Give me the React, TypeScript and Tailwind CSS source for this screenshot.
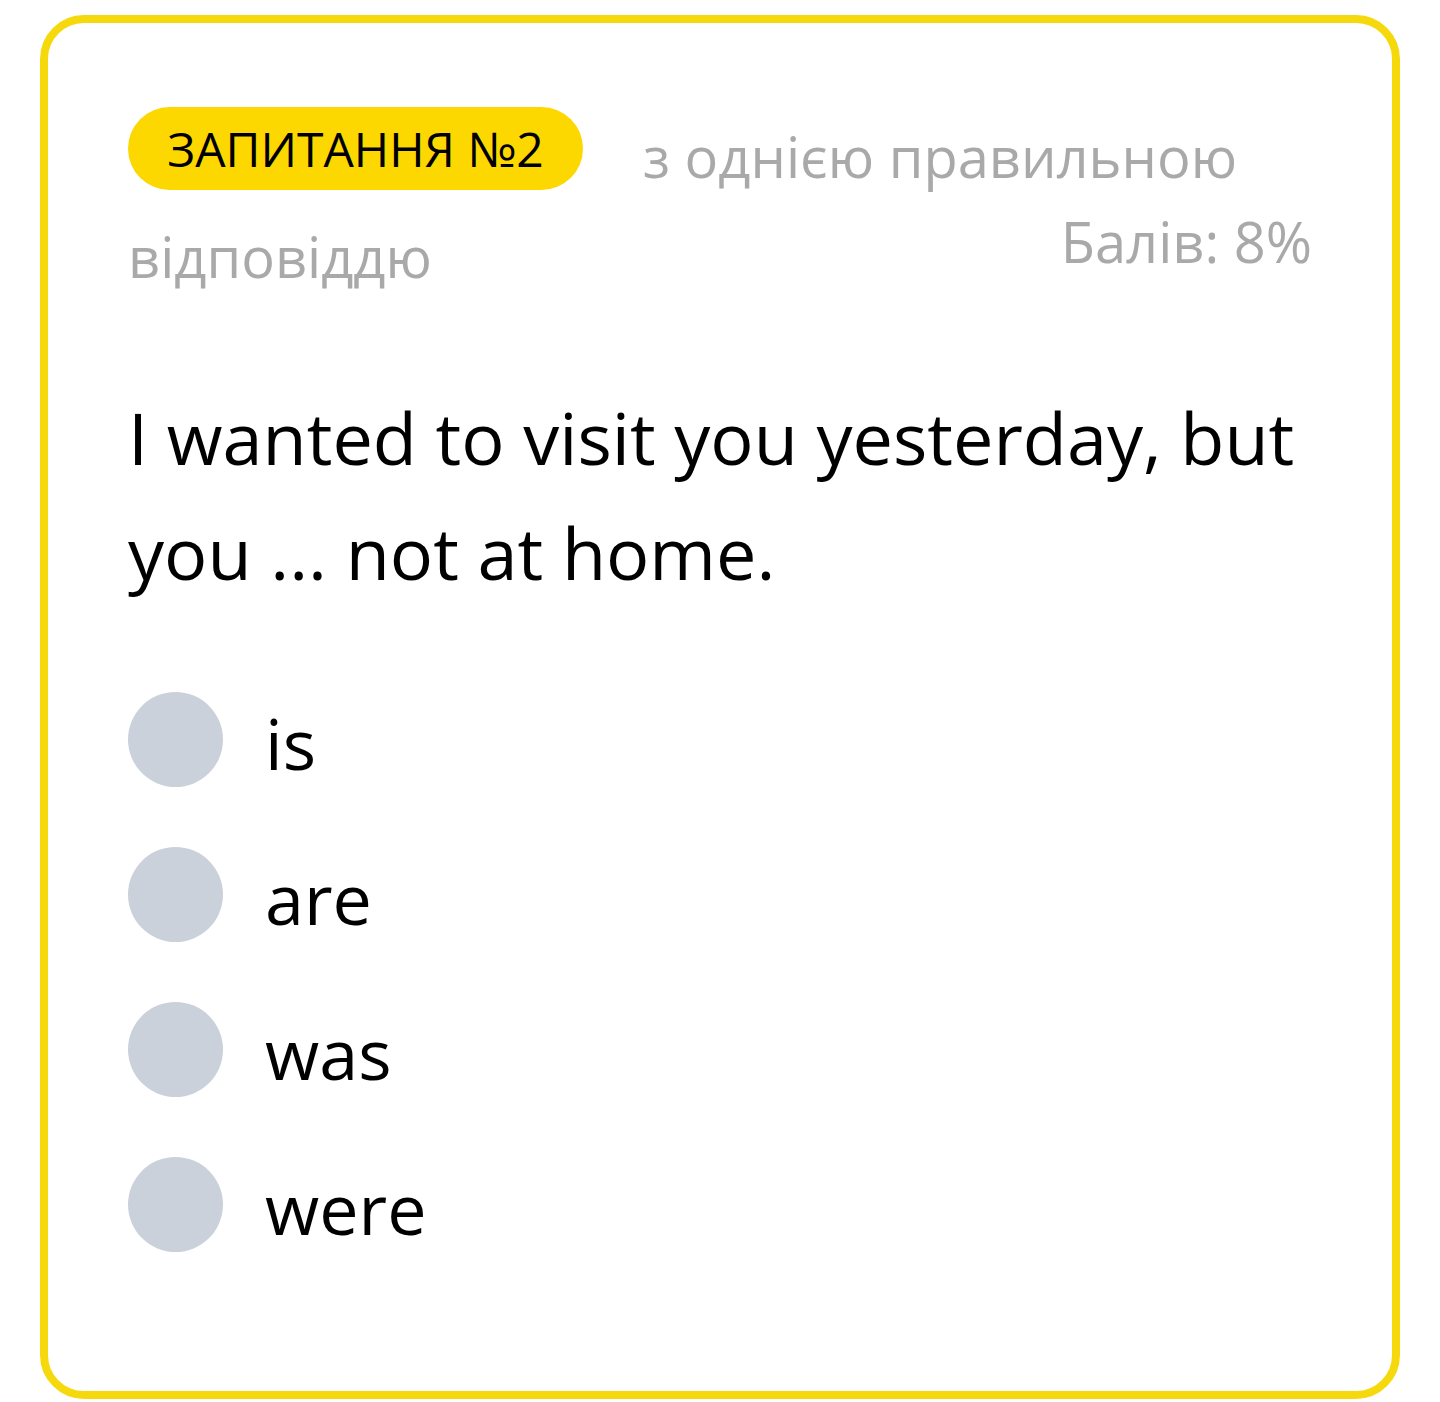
const options = ["is", "are", "was", "were"];

function Option({ label }: { label: string }) {
  return (
    <div className="flex h-[95px] items-start gap-[42px]">
      <div className="h-[95px] w-[95px] shrink-0 rounded-full bg-[#cbd1db]"></div>
      <span className="pt-[4px] text-[70px] leading-[95px] text-black">
        {label}
      </span>
    </div>
  );
}

export default function App() {
  return (
    <div className="min-h-[1402px] bg-white pt-[15px] font-['Open_Sans',sans-serif]">
      <div className="mx-[40px] h-[1384px] w-[1360px] rounded-[44px] border-[8px] border-[#f6d90c] bg-white px-[80px] pt-[83px]">
        <div className="flex h-[100px] items-start">
          <div className="mt-px flex h-[83px] w-[455px] items-center justify-center rounded-full bg-[#fdd800] text-[48px] text-black">
            ЗАПИТАННЯ №2
          </div>
          <span className="ml-[60px] text-[56px] leading-[100px] text-[#a9a9a9]">
            з однією правильною
          </span>
        </div>
        <div className="flex h-[100px] items-start justify-between">
          <span className="text-[56px] leading-[100px] text-[#a9a9a9]">
            відповіддю
          </span>
          <span className="-mt-[15px] text-[56px] leading-[100px] text-[#a9a9a9]">
            Балів: 8%
          </span>
        </div>

        <p className="mt-[74px] text-[72px] leading-[115px] text-black">
          I wanted to visit you yesterday, but you ... not at home.
        </p>

        <div className="mt-[82px] flex flex-col gap-[60px]">
          {options.map((o) => (
            <Option key={o} label={o} />
          ))}
        </div>
      </div>
    </div>
  );
}
